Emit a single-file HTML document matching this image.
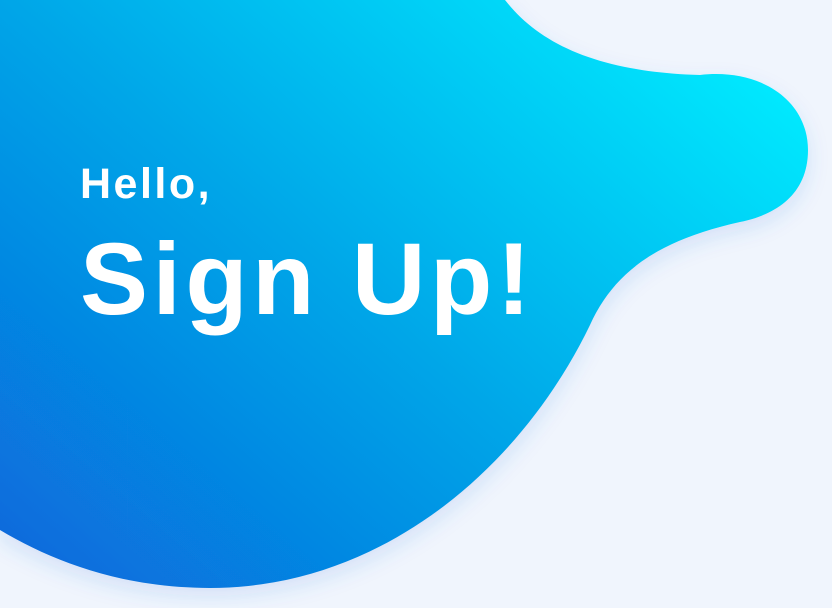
<!DOCTYPE html>
<html><head><style>
html,body{margin:0;padding:0;width:832px;height:608px;overflow:hidden;background:#f0f5fd;font-family:"Liberation Sans",sans-serif}
svg{position:absolute;left:0;top:0}
.t{position:absolute;left:80px;color:#fff;font-weight:bold}
</style></head><body>
<svg width="832" height="608" viewBox="0 0 832 608">
<defs>
<linearGradient id="g" x1="0" y1="1" x2="1" y2="0.15">
<stop offset="0" stop-color="#0865db"/>
<stop offset="0.5" stop-color="#04a6e8"/>
<stop offset="1" stop-color="#00ecff"/>
</linearGradient>
<filter id="s" x="-10%" y="-10%" width="120%" height="130%">
<feDropShadow dx="0" dy="8" stdDeviation="10" flood-color="#2a6ad8" flood-opacity="0.15"/>
</filter>
</defs>
<path filter="url(#s)" fill="url(#g)" d="M0,0 L505,0 C540,45 600,72 700,75 C760,68 808,100 808,150 C808,195 775,215 740,222 C660,240 615,270 590,325 C520,470 380,588 210,588 C120,588 50,560 0,530 Z"/>
</svg>
<div class="t" style="top:160px;font-size:43px;letter-spacing:2.5px">Hello,</div>
<div class="t" style="top:221px;font-size:102px;letter-spacing:4.5px">Sign Up!</div>
</body></html>
